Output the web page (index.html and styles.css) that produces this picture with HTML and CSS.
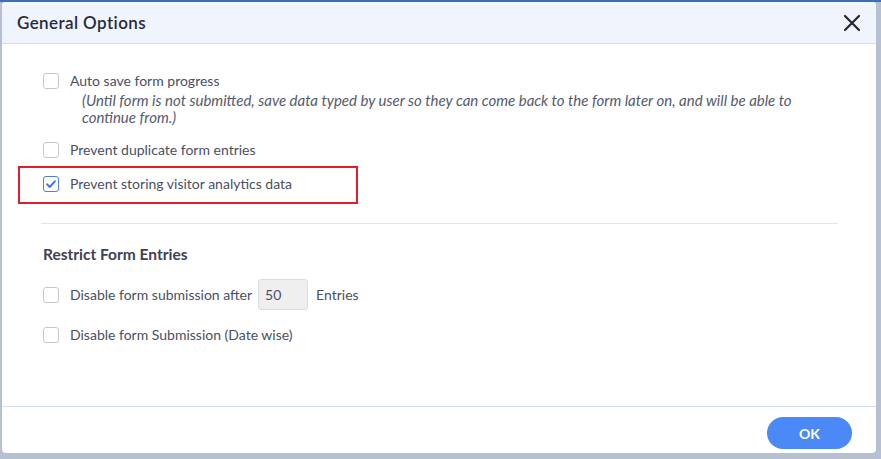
FILE: index.html
```html
<!DOCTYPE html>
<html>
<head>
<meta charset="utf-8">
<link rel="stylesheet" href="styles.css">
</head>
<body>
<div class="dialog">
  <div class="header">
    <div class="title">General Options</div>
    <button class="close" aria-label="Close">
      <svg width="18" height="18" viewBox="0 0 18 18"><path d="M2 2 L16 16 M16 2 L2 16" stroke="#23263a" stroke-width="2.2" stroke-linecap="round" fill="none"/></svg>
    </button>
  </div>
  <div class="body">
    <div class="option">
      <span class="box"></span>
      <div class="otext">
        <div>Auto save form progress</div>
        <div class="note">(Until form is not submitted, save data typed by user so they can come back to the form later on, and will be able to continue from.)</div>
      </div>
    </div>
    <div class="option">
      <span class="box"></span>
      <div class="otext">Prevent duplicate form entries</div>
    </div>
    <div class="highlight">
      <div class="option">
        <span class="box checked">
          <svg width="12" height="12" viewBox="0 0 12 12"><path d="M2 6.2 L4.8 9 L10 3.2" stroke="#3d74dc" stroke-width="1.9" fill="none" stroke-linecap="round" stroke-linejoin="round"/></svg>
        </span>
        <div class="otext">Prevent storing visitor analytics data</div>
      </div>
    </div>
    <hr class="sep">
    <div class="subhead">Restrict Form Entries</div>
    <div class="option inline">
      <span class="box"></span>
      <div class="otext">Disable form submission after</div>
      <input class="num" type="text" value="50">
      <div class="otext">Entries</div>
    </div>
    <div class="option">
      <span class="box"></span>
      <div class="otext">Disable form Submission (Date wise)</div>
    </div>
  </div>
  <div class="footer">
    <button class="ok">OK</button>
  </div>
</div>
</body>
</html>
```
FILE: styles.css
```css
html, body {
  margin: 0;
  padding: 0;
}
body {
  width: 881px;
  height: 459px;
  background: #b7c0d0;
  border-top: 2px solid #3f6db5;
  box-sizing: border-box;
  padding: 0 5px 6px 2px;
  font-family: Lato, "Noto Sans", sans-serif;
  overflow: hidden;
}
.dialog {
  height: 451px;
  background: #fff;
  border-radius: 4px;
  display: flex;
  flex-direction: column;
  overflow: hidden;
}
.header {
  height: 41px;
  background: #f0f4fd;
  border-bottom: 1px solid #d6dff2;
  display: flex;
  align-items: center;
  justify-content: space-between;
  padding: 0 15px 0 15px;
  flex-shrink: 0;
}
.title {
  font-size: 17px;
  font-weight: 600;
  letter-spacing: 0.4px;
  color: #262a40;
}
.close {
  border: 0;
  background: none;
  padding: 0;
  width: 18px;
  height: 18px;
  display: flex;
  margin-top: 1px;
}
.body {
  flex: 1;
  padding: 28px 38px 0 41px;
  color: #4a4f63;
  font-size: 14px;
}
.option {
  display: flex;
  align-items: flex-start;
  gap: 11px;
  line-height: 17px;
}
.option + .option {
  margin-top: 15px;
}
.option + .highlight {
  margin-top: 8px;
}
.box {
  width: 16px;
  height: 16px;
  box-sizing: border-box;
  border: 1.5px solid #c4c8d0;
  border-radius: 3px;
  flex-shrink: 0;
  margin-top: 1px;
  display: flex;
  align-items: center;
  justify-content: center;
}
.box.checked {
  border-color: #4b80e2;
}
.note {
  font-style: italic;
  font-size: 15px;
  color: #555a6d;
  margin-left: 12px;
  margin-top: 3px;
  width: 730px;
}
.highlight {
  border: 2px solid #e01f2a;
  margin-left: -25px;
  width: 340px;
  box-sizing: border-box;
  padding: 7px 0 10px 23px;
}
.sep {
  border: 0;
  border-top: 1px solid #e2e5ea;
  margin: 19px 0 0 -2px;
}
.subhead {
  font-size: 15.5px;
  font-weight: 700;
  color: #3d4255;
  margin-top: 21px;
  margin-bottom: 16px;
}
.option.inline {
  align-items: center;
  gap: 0;
}
.option.inline .box {
  margin: 0 11px 0 0;
}
.num {
  width: 50px;
  height: 31px;
  box-sizing: border-box;
  margin: 0 8px 0 6px;
  border: 1px solid #d6deee;
  background: #efefef;
  border-radius: 3px;
  padding: 0 0 0 6px;
  font-family: inherit;
  font-size: 14px;
  color: #4a4f63;
}
.option.inline + .option {
  margin-top: 16px;
}
.footer {
  height: 46px;
  border-top: 1px solid #d6dff2;
  display: flex;
  align-items: center;
  justify-content: flex-end;
  padding: 0 24px 0 0;
  flex-shrink: 0;
}
.ok {
  width: 85px;
  height: 32px;
  border: 0;
  border-radius: 16px;
  background: #4b89f6;
  color: #fff;
  font-family: inherit;
  font-weight: 700;
  font-size: 14px;
  margin-top: 6px;
}
```
